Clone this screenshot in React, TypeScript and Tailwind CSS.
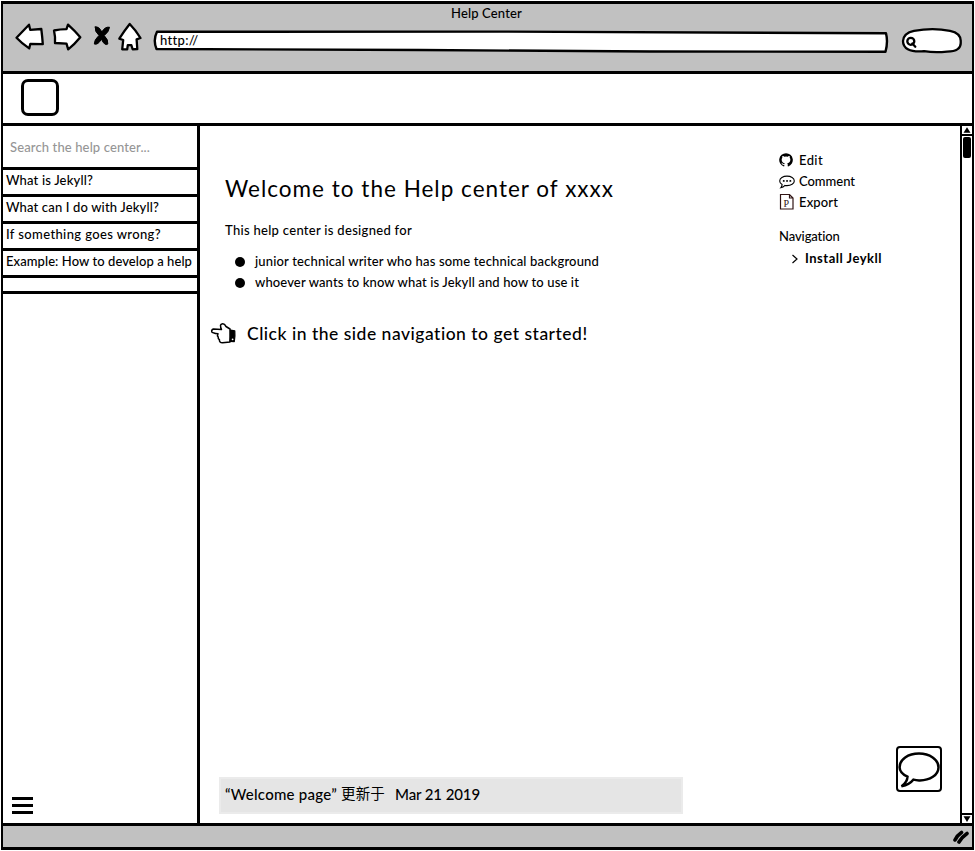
import { useLayoutEffect, useRef, useState } from "react";
import type { ReactNode } from "react";

/** A line of text whose tracking is adjusted so that it spans `width` pixels. */
function Label({ text, width, className = "" }: { text: string; width: number; className?: string }) {
  const ref = useRef<HTMLSpanElement>(null);
  const [spacing, setSpacing] = useState(0);
  useLayoutEffect(() => {
    const el = ref.current;
    if (!el) return;
    el.style.letterSpacing = "0px";
    const value = (width - el.getBoundingClientRect().width) / text.length;
    el.style.letterSpacing = `${value}px`;
    setSpacing(value);
  }, [text, width]);
  return (
    <span ref={ref} className={`inline-block shrink-0 whitespace-pre ${className}`} style={{ letterSpacing: spacing }}>
      {text}
    </span>
  );
}

function Sketch({ box, className, children }: { box: string; className: string; children: ReactNode }) {
  return (
    <svg
      viewBox={box}
      className={`block shrink-0 ${className}`}
      fill="white"
      stroke="black"
      strokeWidth="2.3"
      strokeLinejoin="round"
      strokeLinecap="round"
    >
      {children}
    </svg>
  );
}

function BrowserBar() {
  return (
    <header className="h-[70px] shrink-0 border-b-[3px] border-black bg-[#c1c1c1]">
      <div className="flex h-[19px] justify-center pr-[2px] leading-[18px]">
        <Label text="Help Center" width={71} />
      </div>
      <div className="flex items-start pl-[11px]">
        <Sketch box="14 23 32 28" className="h-[28px] w-[32px]">
          <path d="M16.5 37.7 L29 24.7 L30.2 29.8 L41.3 29 Q42.3 37 42.8 44.2 L30.3 44 L29.2 48.4 Q22 43.5 16.5 37.7Z" />
        </Sketch>
        <Sketch box="51 23 32 28" className="ml-[5px] h-[28px] w-[32px]">
          <path d="M54 30.5 Q60 29.3 66.5 29.2 L68 24.7 Q75 31 80.3 37.3 Q74.5 44.5 68.2 49.3 L66.5 43.7 L55 43 Q55.4 36.5 54 30.5Z" />
        </Sketch>
        <Sketch box="92 23 20 28" className="ml-[9px] h-[28px] w-[20px]">
          <path
            fill="black"
            strokeWidth="1"
            d="M95.2 27 Q99 26 101.8 32 Q105 26.5 109.5 27.2 Q109.2 31.5 104.2 35.6 Q108.6 40 107.8 44 Q104.8 46.3 101.4 39.2 Q98 45.2 94.3 44 Q94 40 99 35.4 Q94.4 31.5 95.2 27Z"
          />
        </Sketch>
        <Sketch box="117 22 26 30" className="-mt-px ml-[5px] h-[30px] w-[26px]">
          <path d="M129.7 24 Q136 30.5 140.5 38 L136.6 39.3 L137.3 49 L132.6 49.3 L131.4 45.2 L127.8 45.2 L127.2 49.4 L122.2 49.3 L123.2 40 L119.3 38.7 Q124.5 30.5 129.7 24Z" />
        </Sketch>
        <div className="relative mt-[6px] ml-[9px] h-[24px] w-[738px]">
          <Sketch box="152 29 738 24" className="h-[24px] w-[738px]">
            <path
              strokeWidth="2.4"
              d="M157 31.8 Q320 31.2 500 31.6 Q690 31.8 886 33.2 Q888.2 42 885.5 51.7 L650 51.5 L420 50 Q280 49.3 156.5 49 Q152.8 40 157 31.8Z"
            />
          </Sketch>
          <Label text="http://" width={38} className="absolute top-px left-[8px] leading-[20px]" />
        </div>
        <Sketch box="900 27 64 29" className="mt-[4px] ml-[9px] h-[29px] w-[64px]">
          <path d="M904 41 Q904.5 33 915 30.8 Q934 27.6 951 30.8 Q962.5 33.2 961.7 42 Q962.5 51.5 948 51.6 Q936 53 925 51.2 C910 52.5 904 48 904 41Z" />
          <circle cx="911.8" cy="41.3" r="3.5" />
          <path d="M913.3 43.5 L916.3 46.7" />
        </Sketch>
      </div>
    </header>
  );
}

const topics = [
  { text: "What is Jekyll?", width: 87 },
  { text: "What can I do with Jekyll?", width: 153 },
  { text: "If something goes wrong?", width: 155 },
  { text: "Example: How to develop a help", width: 186 },
];

function Sidebar() {
  return (
    <aside className="flex w-[197px] shrink-0 flex-col border-r-[3px] border-black">
      <div className="h-[41px] pl-[7px] leading-[43px] text-[#969696]">
        <Label text="Search the help center..." width={140} />
      </div>
      <ul className="border-t-[3px] border-black">
        {topics.map((t) => (
          <li key={t.text} className="h-[27px] border-b-[3px] border-black pl-[3px] leading-[21px]">
            <Label text={t.text} width={t.width} />
          </li>
        ))}
        <li className="h-[16px] border-b-[3px] border-black" />
      </ul>
      <div className="mt-auto mb-[9px] ml-[9px] flex w-[21px] flex-col gap-[4px]">
        <span className="h-[3px] bg-black" />
        <span className="h-[3px] bg-black" />
        <span className="h-[3px] bg-black" />
      </div>
    </aside>
  );
}

function Article() {
  return (
    <main className="flex w-[570px] shrink-0 flex-col">
      <h1 className="mt-[46px] ml-[25px] h-[34px] text-[22.5px] leading-[34px] font-normal">
        <Label text="Welcome to the Help center of xxxx" width={389} />
      </h1>
      <p className="mt-[14px] ml-[25px] h-[20px] leading-[20px]">
        <Label text="This help center is designed for" width={187} />
      </p>
      <ul className="mt-[11px] ml-[35px] leading-[21px]">
        <li className="flex h-[21px] items-center gap-[10px]">
          <span className="size-[10px] rounded-full bg-black" />
          <Label text="junior technical writer who has some technical background" width={344} />
        </li>
        <li className="flex h-[21px] items-center gap-[10px]">
          <span className="size-[10px] rounded-full bg-black" />
          <Label text="whoever wants to know what is Jekyll and how to use it" width={324} />
        </li>
      </ul>
      <div className="mt-[28px] ml-[9px] flex h-[26px] items-center text-[17.5px] leading-[26px]">
        <svg viewBox="0 0 28 24" className="mr-[10px] h-[24px] w-[28px]" fill="white" stroke="black" strokeWidth="1.5" strokeLinejoin="round">
          <path d="M21 7 L17 4.5 L15.500 2.400 Q12.500 1 11.500 3.200 Q11.500 5.600 12.500 7.600 L4.500 7 Q2.200 7.800 2.800 9.800 Q3.400 10.900 9 11.800 Q7.800 13.600 9.200 15 Q8.900 16.800 10.400 17.700 Q10.200 20.600 13.500 20.800 L21 20Z" />
          <path fill="black" strokeWidth="1.200" d="M21.500 8.200 L25.800 8.800 Q26.300 14 25.300 19.600 L21 19.500 Q22.200 14 21.500 8.200Z" />
          <circle cx="23.600" cy="17.300" r="0.900" stroke="none" />
        </svg>
        <Label text="Click in the side navigation to get started!" width={341} />
      </div>
      <div className="mt-auto mb-[9px] ml-[19px] flex h-[37px] w-[464px] items-center border-2 border-[#ebebeb] bg-[#e5e5e5] pb-[3px] pl-[4px] text-[15px] leading-[24px]">
        <Label text="“Welcome page”" width={112} />
        <Label text="更新于" width={44} className="ml-[4px] text-[14.500px] font-normal" />
        <Label text="Mar 21 2019" width={85} className="ml-[10px]" />
      </div>
    </main>
  );
}

function Tools() {
  return (
    <div className="flex grow flex-col pt-[24px] pl-[9px] leading-[21px]">
      <div className="flex h-[21px] items-center">
        <svg viewBox="1 1 14 14" className="mr-[6px] mb-[2px] size-[14px]">
          <path d="M8 1.200a6.800 6.800 0 0 0-2.150 13.250c.34.06.47-.15.47-.33v-1.260c-1.900.41-2.300-.8-2.300-.8-.31-.8-.76-1-.76-1-.62-.43.05-.42.05-.42.69.05 1.050.7 1.050.7.61 1.050 1.600.75 1.990.57.06-.44.24-.75.43-.92-1.520-.17-3.100-.76-3.100-3.360 0-.74.26-1.350.7-1.830-.07-.17-.3-.86.07-1.800 0 0 .57-.18 1.870.7a6.500 6.500 0 0 1 3.400 0c1.300-.88 1.870-.7 1.870-.7.37.94.14 1.630.07 1.800.44.48.7 1.090.7 1.830 0 2.600-1.600 3.190-3.120 3.360.25.2.47.62.47 1.250v1.880c0 .18.12.39.47.33A6.800 6.800 0 0 0 8 1.200Z" />
        </svg>
        <Label text="Edit" width={24} />
      </div>
      <div className="flex h-[21px] items-center">
        <svg viewBox="0 0 16 14" className="mr-[4px] h-[14px] w-[16px]" fill="none" stroke="black" strokeWidth="1.100">
          <path d="M8 1.100c4 0 7.300 2 7.300 4.800S12 10.600 8 10.600c-.7 0-1.400 0-2-.2-1.200 1.400-2.600 2.200-4.200 2.400.8-.9 1.300-2 1.300-3.300C1.600 8.600.7 7.400.7 5.900.7 3.100 4 1.100 8 1.100Z" />
          <path strokeWidth="1.900" strokeLinecap="round" d="M4.700 5.900h.1M8 5.900h.1M11.300 5.900h.1" />
        </svg>
        <Label text="Comment" width={56} />
      </div>
      <div className="flex h-[21px] items-center">
        <svg viewBox="0 0 16 17" className="mr-[4px] mb-[2px] h-[17px] w-[16px]" fill="none" stroke="#301414" strokeWidth="1.200">
          <path d="M1.500 1.500h9l3.500 3.500v11h-12.500ZM10.500 1.500v3.500h3.500" />
          <text x="4.500" y="13.800" fill="#301414" stroke="none" className="font-['Liberation_Serif',serif] text-[10px] font-normal">
            P
          </text>
        </svg>
        <Label text="Export" width={39} />
      </div>
      <div className="mt-[13px] h-[21px]">
        <Label text="Navigation" width={61} />
      </div>
      <div className="mt-px flex h-[21px] items-center pl-[12px] font-bold">
        <svg viewBox="0 0 8 10" className="mr-[6px] h-[10px] w-[8px]" fill="none" stroke="black" strokeWidth="1.200">
          <path d="M1.500 1l4.500 4-4.500 4" />
        </svg>
        <Label text="Install Jeykll" width={77} />
      </div>
      <div className="mt-auto mr-[18px] mb-[31px] flex size-[46px] items-center justify-center self-end rounded-[4px] border-2 border-black">
        <svg viewBox="0 0 42 38" className="h-[38px] w-[42px]" fill="white" stroke="black" strokeWidth="2.500">
          <path d="M21 3.500 C31.500 3.500 40.500 9.500 40.500 17.200 C40.500 25 32 30.700 21 30.400 C18.500 30.300 17 30 15.500 29.600 C12.500 33.500 9 35.300 3.500 36.300 C7.500 33.500 9.300 30.500 9.500 26.700 C4.500 24.300 1.600 21.500 1.600 17.200 C1.600 9.500 10 3.500 21 3.500Z" />
        </svg>
      </div>
    </div>
  );
}

function Scrollbar() {
  return (
    <div className="flex w-[12px] shrink-0 flex-col border-l-2 border-black">
      <div className="flex h-[10px] items-center justify-center border-b-2 border-black pb-px">
        <svg viewBox="0 0 8 6" className="h-[6px] w-[8px]">
          <path d="M.5 5.800L4 .3l3.500 5.500Z" />
        </svg>
      </div>
      <span className="mt-px ml-px h-[21px] w-[8px] rounded-[2px] bg-black" />
      <div className="mt-auto flex h-[10px] items-center justify-center border-t-2 border-black">
        <svg viewBox="0 0 8 6" className="h-[6px] w-[8px]">
          <path d="M.5.3h7L4 5.900Z" />
        </svg>
      </div>
    </div>
  );
}

export default function App() {
  return (
    <div className="h-[851px] w-[975px] bg-white p-px font-['Lato','Noto_Sans_CJK_SC',sans-serif] text-[13px] font-medium text-black">
      <div className="flex h-[849px] flex-col border-x-2 border-y-[3px] border-black">
        <BrowserBar />
        <div className="flex h-[52px] shrink-0 items-start border-b-[3px] border-black pt-[5px] pl-[18px]">
          <div className="h-[37px] w-[38px] rounded-[7px] border-[3px] border-black" />
        </div>
        <div className="flex min-h-0 grow">
          <Sidebar />
          <Article />
          <Tools />
          <Scrollbar />
        </div>
        <footer className="flex h-[24px] shrink-0 items-center justify-end border-t-[3px] border-black bg-[#c1c1c1] pr-[3px]">
          <svg viewBox="0 0 17 15" className="h-[15px] w-[17px]" fill="none" stroke="black" strokeLinecap="round" strokeWidth="3.600">
            <path d="M3 11Q5 6.500 9.500 3.500M7 13Q10 8 15 4.500" />
          </svg>
        </footer>
      </div>
    </div>
  );
}
